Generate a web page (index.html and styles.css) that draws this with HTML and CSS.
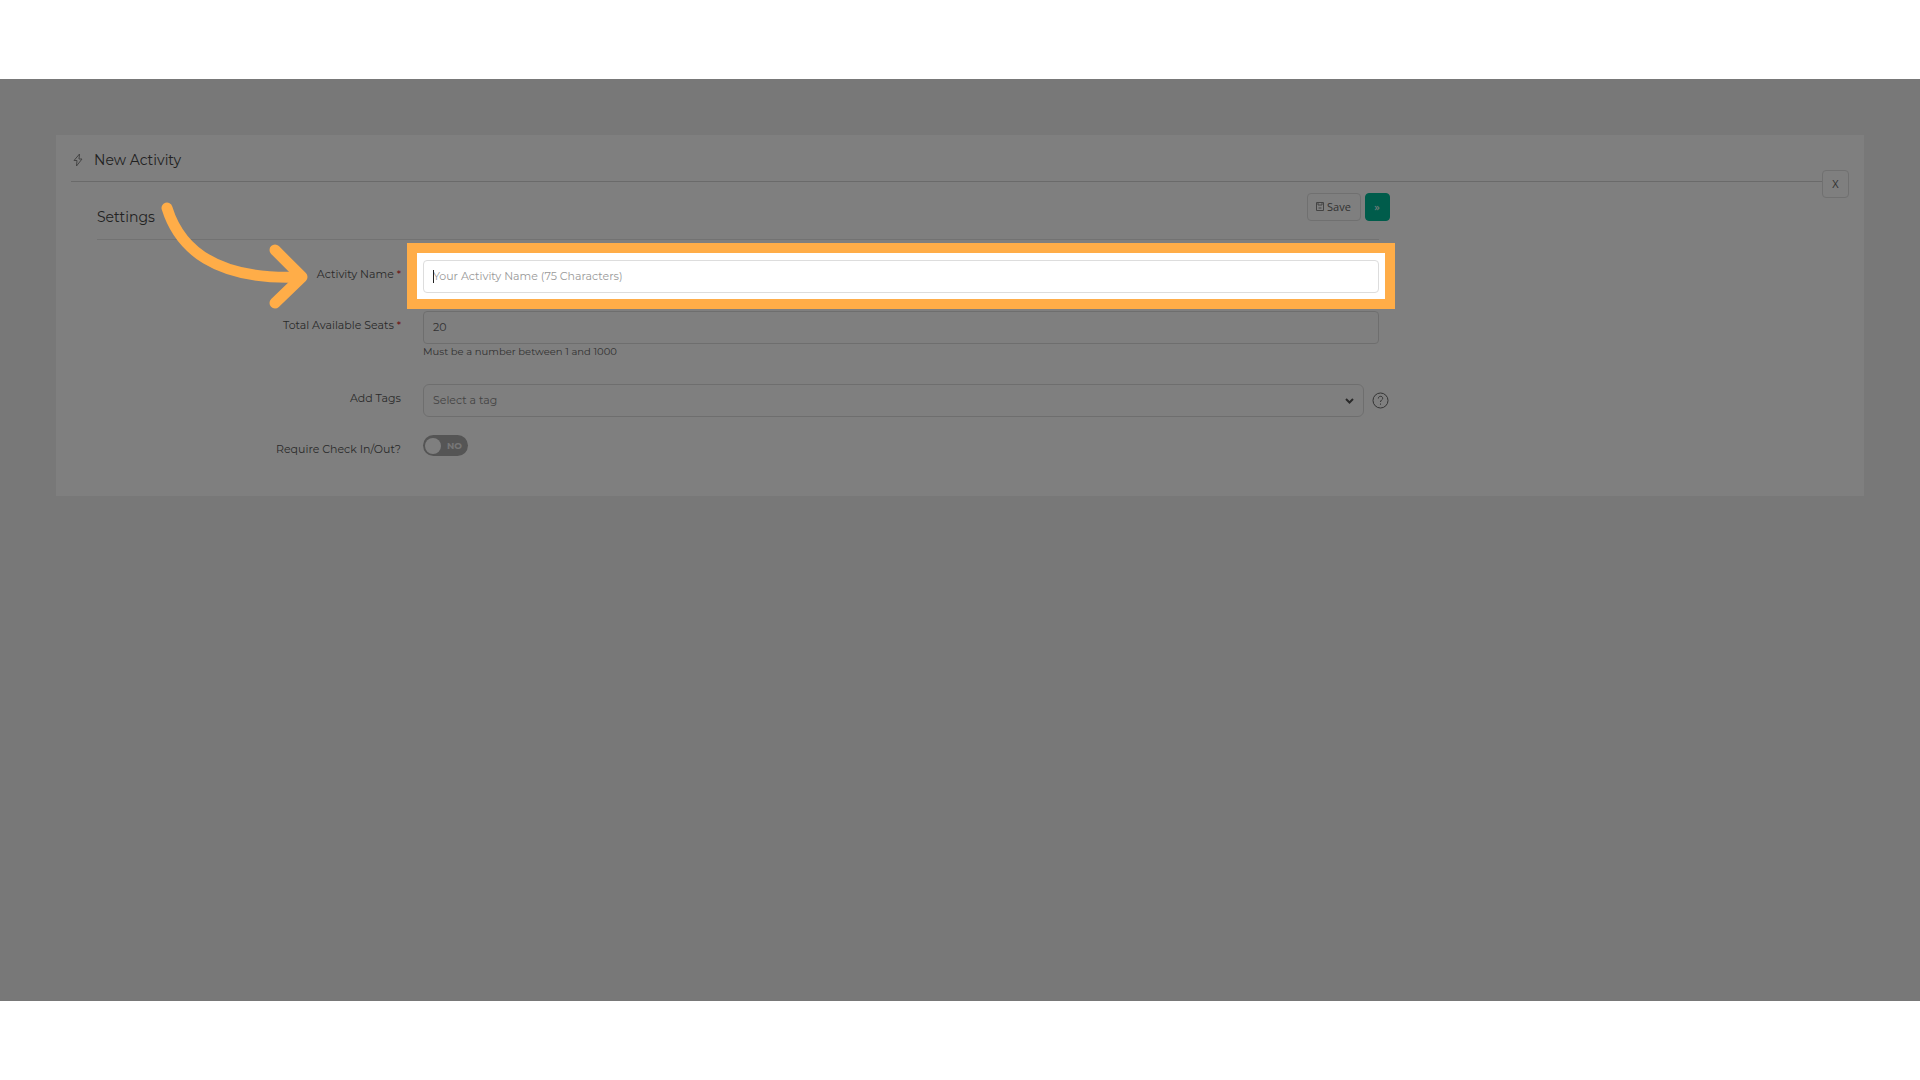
FILE: index.html
```html
<!DOCTYPE html>
<html lang="en">
<head>
    <meta charset="UTF-8">
    <meta name="viewport" content="width=device-width, initial-scale=1.0">
    <title>New Activity</title>
    <link rel="stylesheet" href="styles.css">
</head>
<body>
    <main class="stage">
        <div class="panel">
            <h1 class="panel-title">
                <svg class="bolt" width="10" height="14" viewBox="0 0 10 14"><path d="M6.5 1 L1 7.5 H4 L3.5 13 L9 6 H6 Z"/></svg>
                New Activity
            </h1>
            <div class="divider">
                <span class="divider-line"></span>
                <button type="button" class="btn btn-close">X</button>
            </div>

            <form class="section">
                <div class="section-head">
                    <h2>Settings</h2>
                    <div class="actions">
                        <button type="button" class="btn btn-save">
                            <svg width="8" height="9" viewBox="0 0 8 9"><path d="M.5 .5 H7.5 V8.5 H.5 Z M2 .5 V3 H6 V.5 M2.5 6 H5.5"/></svg>
                            Save
                        </button>
                        <button type="button" class="btn btn-next">»</button>
                    </div>
                </div>

                <div class="form-group">
                    <label for="name">Activity Name <span class="required">*</span></label>
                    <div class="field">
                        <input type="text" id="name" placeholder="Your Activity Name (75 Characters)">
                        <span class="caret"></span>
                        <div class="spotlight"></div>
                        <svg class="arrow" width="156" height="120" viewBox="0 0 156 120">
                            <path d="M11 12 C23 51 58 85 145 81"/>
                            <path d="M119 54 L146 81 L119 107"/>
                        </svg>
                    </div>
                </div>
                <div class="form-group seats">
                    <label for="seats">Total Available Seats <span class="required">*</span></label>
                    <div class="field">
                        <input type="text" id="seats" value="20">
                        <p class="hint">Must be a number between 1 and 1000</p>
                    </div>
                </div>
                <div class="form-group">
                    <label for="tags">Add Tags</label>
                    <div class="field tags">
                        <div class="select-wrap">
                            <select id="tags">
                                <option>Select a tag</option>
                            </select>
                            <svg class="chevron" width="9" height="6" viewBox="0 0 9 6"><path d="M1 1 L4.5 4.5 L8 1"/></svg>
                        </div>
                        <svg class="help" width="17" height="17" viewBox="0 0 17 17"><circle cx="8.5" cy="8.5" r="7.5"/><path d="M6.3 6.5 C6.3 3.6 10.7 3.6 10.7 6.3 C10.7 8 8.5 8 8.5 10 M8.5 11.5 V12.7"/></svg>
                    </div>
                </div>
                <div class="form-group">
                    <label for="checkin">Require Check In/Out?</label>
                    <div class="field toggle">
                        <input type="checkbox" id="checkin">
                        <span class="toggle-text">NO</span>
                    </div>
                </div>
            </form>
        </div>
    </main>
</body>
</html>
```
FILE: styles.css
```css
* {
    box-sizing: border-box;
}
body {
    margin: 0;
    min-height: 100vh;
    padding: 79px 0;
    display: flex;
    background: #fff;
    color: #555;
    font-family: Montserrat, Inter, sans-serif;
    font-size: 11px;
}
.stage {
    flex: 1;
    padding: 56px;
    background: #f0f0f0;
    overflow: hidden;
}
.panel {
    padding: 15px 15px 37px;
    background: #fff;
}
h1, h2 {
    margin: 0;
    font-size: 14px;
    font-weight: 400;
    line-height: 20px;
    color: #444;
}
.panel-title {
    display: flex;
    align-items: center;
    gap: 11px;
    padding-left: 2px;
}
svg {
    fill: none;
    stroke: #888;
}
.divider {
    display: flex;
    align-items: flex-start;
}
.divider-line {
    flex: 1;
    margin-top: 11px;
    border-top: 1px solid #d4d4d4;
}
.btn {
    height: 28px;
    padding: 0 0 2px;
    border: 1px solid #e0e0e0;
    border-radius: 4px;
    background: #fff;
    color: #666;
    font-family: "Open Sans", sans-serif;
    font-size: 11px;
}
.btn-close {
    width: 27px;
}
.btn-save {
    display: flex;
    align-items: center;
    justify-content: center;
    gap: 3px;
    width: 54px;
}
.btn-next {
    width: 25px;
    border-color: #00b897;
    background: #00b897;
    color: #fff;
}
.section {
    width: 75%;
    margin-top: -5px;
    padding: 0 26px;
}
.section-head {
    display: flex;
    justify-content: space-between;
    margin-bottom: 20px;
    border-bottom: 1px solid #e4e4e4;
}
.section-head h2 {
    padding: 14px 0 12px;
}
.actions {
    display: flex;
    gap: 4px;
    margin-right: -11px;
}
.form-group {
    display: grid;
    grid-template-columns: 304px 1fr;
    column-gap: 22px;
    margin-bottom: 18px;
}
.form-group label {
    padding-top: 4px;
    line-height: 20px;
    text-align: right;
}
.form-group:last-child {
    margin-bottom: 0;
}
.seats {
    margin-bottom: 24px;
}
.required {
    color: #d22;
}
.field {
    position: relative;
}
input[type="text"], select {
    display: block;
    width: 100%;
    height: 33px;
    padding: 0 9px 2px;
    border: 1px solid #ddd;
    border-radius: 4px;
    background: #fff;
    color: #666;
    font: inherit;
}
input::placeholder {
    color: #999;
}
.hint {
    margin: 0;
    line-height: 16px;
    font-size: 10px;
    color: #666;
}
.caret {
    position: absolute;
    top: 10px;
    left: 10px;
    height: 13px;
    border-left: 1px solid #222;
}
/* frame around the active field, its shadow dims the rest */
.spotlight {
    position: absolute;
    inset: -17px -16px -16px;
    border: 10px solid #ffad48;
    box-shadow: 0 0 0 3000px rgba(0, 0, 0, 0.5);
    pointer-events: none;
    z-index: 1;
}
.arrow {
    position: absolute;
    top: -64px;
    left: -267px;
    stroke: #ffad48;
    stroke-width: 11;
    stroke-linecap: round;
    stroke-linejoin: round;
    pointer-events: none;
    z-index: 2;
}
.tags {
    display: flex;
    align-items: center;
    gap: 8px;
    margin-right: -10px;
}
.select-wrap {
    position: relative;
    flex: 1;
}
select {
    appearance: none;
    border-radius: 6px;
    color: #888;
}
.chevron {
    position: absolute;
    top: 14px;
    right: 10px;
    stroke: #555;
    stroke-width: 2;
    pointer-events: none;
}
.help {
    stroke: #666;
}
.toggle input {
    appearance: none;
    display: block;
    width: 45px;
    height: 21px;
    margin: 0;
    padding: 3px 2px;
    border-radius: 11px;
    background: #aaa;
}
.toggle input::before {
    content: "";
    display: block;
    width: 16px;
    height: 16px;
    border-radius: 50%;
    background: #fff;
}
.toggle-text {
    position: absolute;
    top: 4px;
    left: 24px;
    font-size: 9px;
    font-weight: 700;
    line-height: 13px;
    color: #eee;
    pointer-events: none;
}
```
